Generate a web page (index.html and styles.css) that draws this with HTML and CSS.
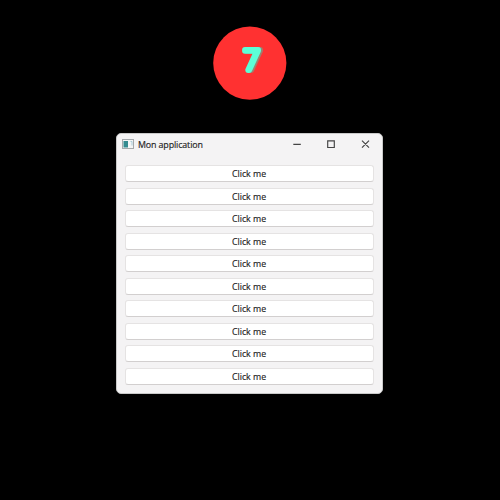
FILE: index.html
```html
<!DOCTYPE html>
<html lang="fr">
<head>
<meta charset="utf-8">
<title>Mon application</title>
<link rel="stylesheet" href="styles.css">
</head>
<body>
<div class="badge">
  <svg class="number" viewBox="0 0 74 74"><circle class="disc" cx="36.8" cy="37.1" r="36.6"/><text class="digit" transform="translate(31.1 43.7) skewX(0)">7</text></svg>
</div>
<main class="window">
  <header class="titlebar">
    <svg class="app-icon" viewBox="0 0 12 10"><rect x=".5" y=".5" width="11" height="9" fill="#f3f5f6" stroke="#a5a9ac"/><rect x="1.5" y="2" width="4.5" height="6.5" fill="#348b90"/><path d="M8.5 2.5h1.5v4" fill="none" stroke="#a8cbd8"/></svg>
    <h1 class="title">Mon application</h1>
    <svg class="controls" viewBox="0 0 80 10"><path d="M1.3 5.3h7.5M35.7 1.9h6.6v6.6h-6.6zM70 1.7l7 7M77 1.7l-7 7"/></svg>
  </header>
  <div class="list">
    <button class="button">Click me</button>
    <button class="button">Click me</button>
    <button class="button">Click me</button>
    <button class="button">Click me</button>
    <button class="button">Click me</button>
    <button class="button">Click me</button>
    <button class="button">Click me</button>
    <button class="button">Click me</button>
    <button class="button">Click me</button>
    <button class="button">Click me</button>
  </div>
</main>
</body>
</html>
```
FILE: styles.css
```css
* { box-sizing: border-box; }
body {
  margin: 0;
  height: 500px;
  overflow: hidden;
  background: #000;
  font-family: "Open Sans", "Noto Sans", sans-serif;
  color: #222;
}
.badge {
  width: 74px;
  height: 74px;
  margin: 26px 0 0 213px;
}
.number { display: block; width: 74px; height: 74px; }
.disc { fill: #ff3131; }
.digit {
  font: 100 28.5px "Roboto", sans-serif;
  fill: #5cffd7;
  stroke: #5cffd7;
  stroke-width: 6px;
  stroke-linejoin: round;
  filter: drop-shadow(2px 0 .7px #9e806f);
}
.window {
  width: 267px;
  height: 261px;
  margin: 33px 0 0 115.5px;
  border: 1px solid #c9c9c9;
  border-radius: 5px;
  background: #f4f3f4;
}
.titlebar {
  display: flex;
  align-items: center;
  height: 20px;
  padding: 0 9.5px 0 5.5px;
}
.app-icon { width: 12px; height: 10px; }
.title {
  margin: 2px auto 0 4px;
  font-size: 8.9px;
  font-weight: 400;
  line-height: 12px;
  letter-spacing: -.13px;
  -webkit-text-stroke: .15px #222;
}
.controls { width: 80px; height: 10px; fill: none; stroke: #444; stroke-width: 1.15; }
.list {
  display: flex;
  flex-direction: column;
  justify-content: space-between;
  height: 220px;
  margin: 11px 8px 0;
}
.button {
  height: 17px;
  padding: 1px 0 0;
  border: 1px solid #e5e3e3;
  border-bottom-color: #d2cfcf;
  border-radius: 3px;
  background: #fff;
  color: #222;
  font: 400 8.8px/14px "Open Sans", "Noto Sans", sans-serif;
  -webkit-text-stroke: .15px #222;
}
```
